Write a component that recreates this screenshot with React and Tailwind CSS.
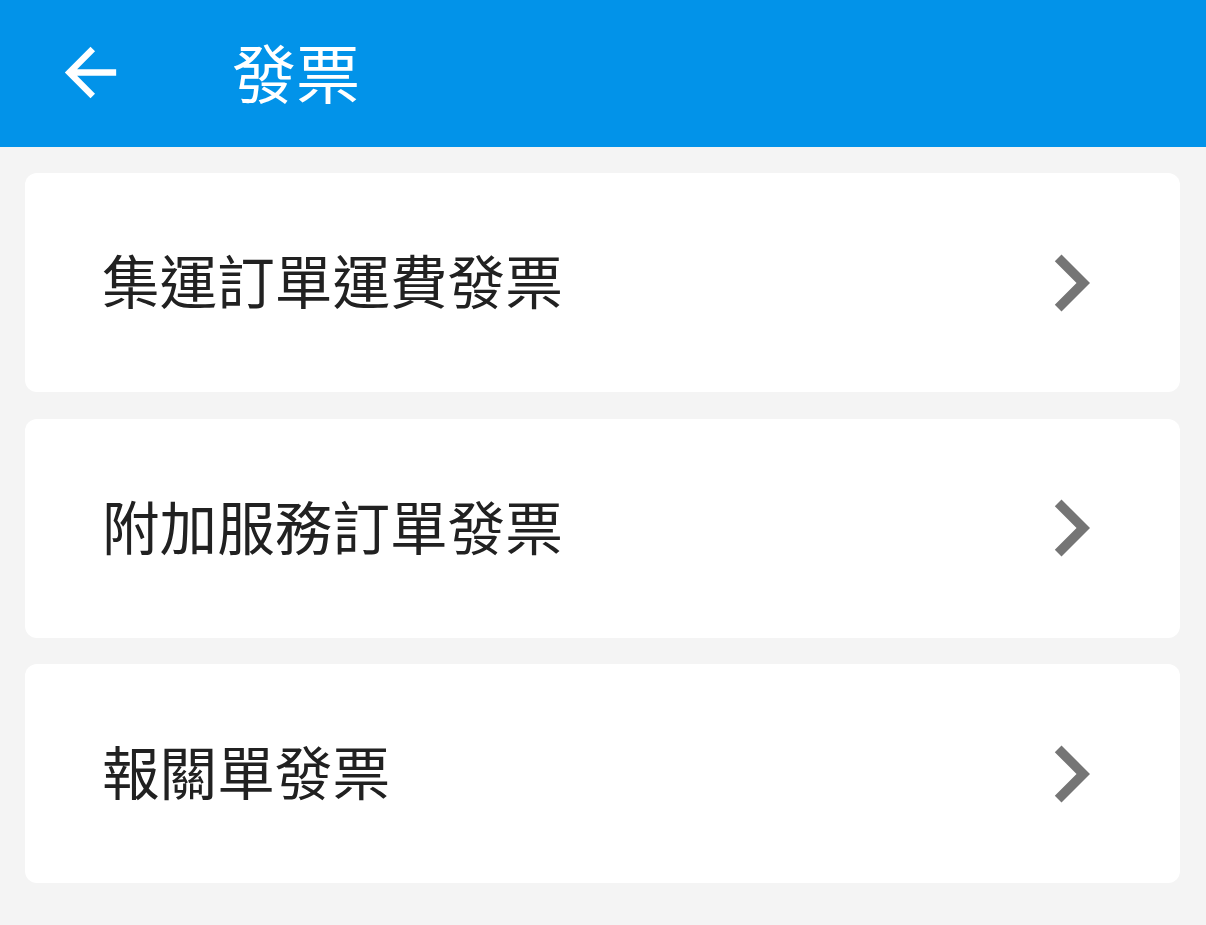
const items = ['集運訂單運費發票', '附加服務訂單發票', '報關單發票'];

const BackArrow = () => (
  <svg viewBox="0 0 24 24" className="w-[77px] h-[77px]" fill="white">
    <path d="M20 11H7.83l5.59-5.59L12 4l-8 8 8 8 1.41-1.41L7.83 13H20v-2z" />
  </svg>
);

const Chevron = () => (
  <svg viewBox="0 0 24 24" className="w-[114px] h-[114px]" fill="#757575">
    <path d="M10 6L8.59 7.41 13.17 12l-4.58 4.59L10 18l6-6z" />
  </svg>
);

export default function App() {
  return (
    <div
      className="min-h-[925px] bg-[#f4f4f4]"
      style={{ fontFamily: '"Noto Sans CJK TC", "Noto Sans", sans-serif' }}
    >
      <header className="h-[147px] bg-[#0293e9] flex items-center">
        <div className="ml-[52px] -mt-[2px]">
          <BackArrow />
        </div>
        <h1 className="ml-[103px] text-white text-[64px] leading-none -mt-[8px]">發票</h1>
      </header>

      <div className="flex flex-col gap-[26.5px] pt-[26px] pl-[25px] pr-[26px]">
        {items.map((item) => (
          <div
            key={item}
            className="h-[219px] bg-white rounded-[12px] flex items-center justify-between pl-[77px] pr-[52px]"
          >
            <span className="text-[57.6px] leading-none text-[#212121] -mt-[5px]">{item}</span>
            <Chevron />
          </div>
        ))}
      </div>
    </div>
  );
}
